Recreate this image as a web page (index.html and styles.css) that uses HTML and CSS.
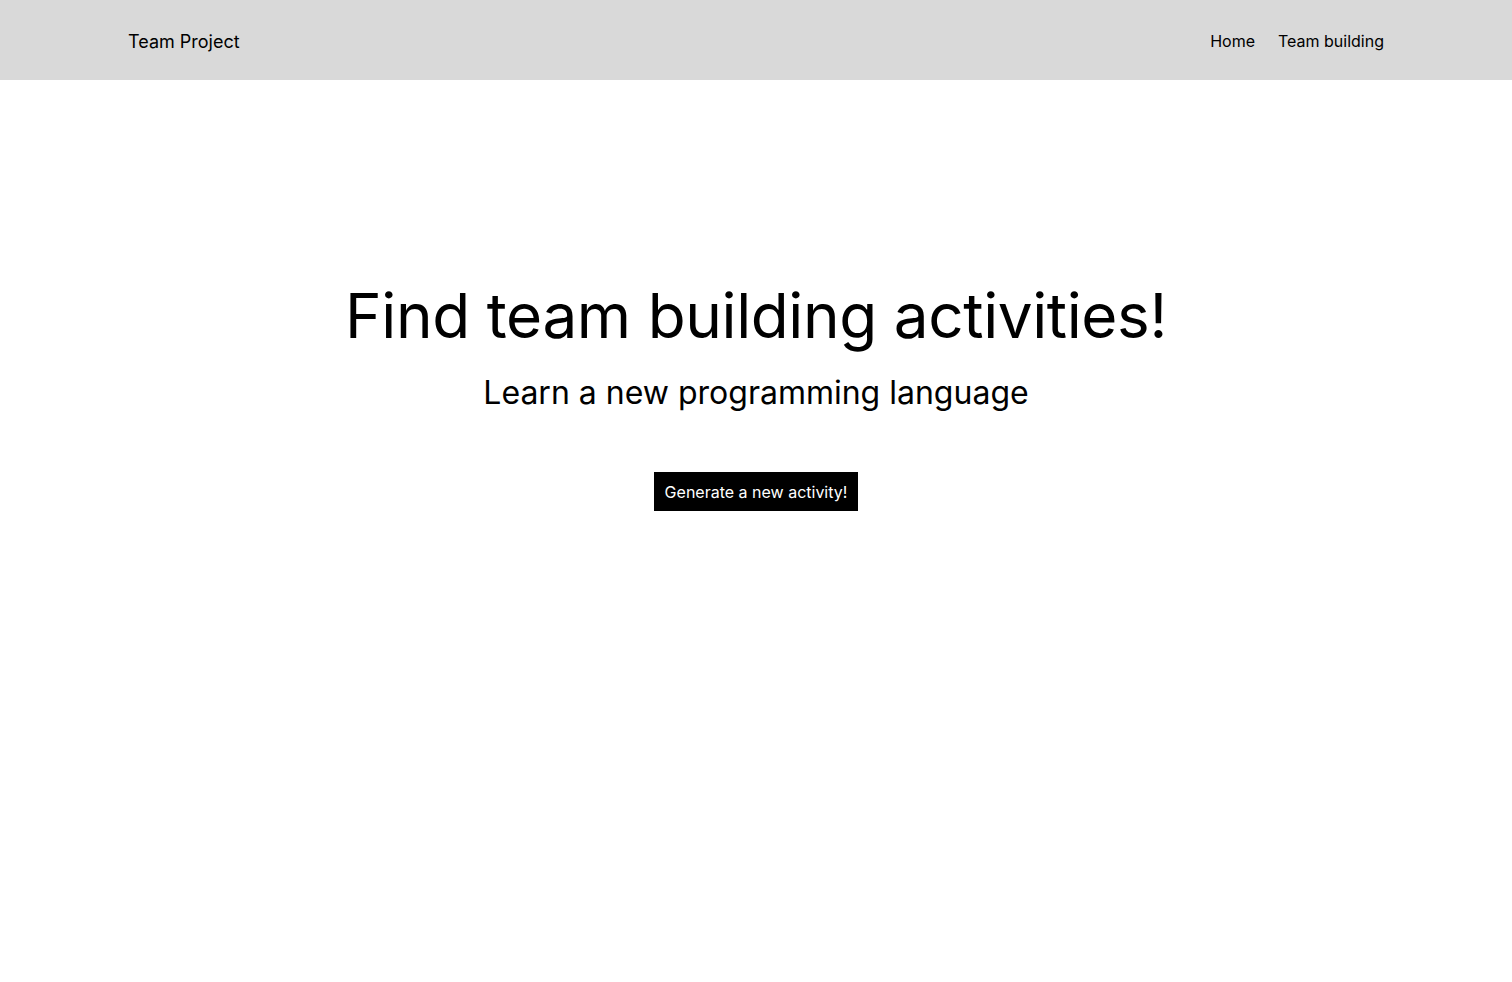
FILE: index.html
```html
<!DOCTYPE html>
<html lang="en">
<head>
<meta charset="utf-8">
<title>Team Project</title>
<link rel="stylesheet" href="styles.css">
</head>
<body>
<header class="topbar">
  <div class="brand">Team Project</div>
  <nav class="nav">
    <a class="nav-link" href="#">Home</a>
    <a class="nav-link" href="#">Team building</a>
  </nav>
</header>
<main class="hero">
  <h1 class="title">Find team building activities!</h1>
  <p class="subtitle">Learn a new programming language</p>
  <button class="btn">Generate a new activity!</button>
</main>
</body>
</html>
```

FILE: styles.css
```css
* { box-sizing: border-box; }
html, body { margin: 0; padding: 0; }
body {
  font-family: Inter, "Noto Sans", sans-serif;
  color: #000;
  background: #fff;
}
.topbar {
  height: 80px;
  background: #d9d9d9;
  display: flex;
  align-items: center;
  justify-content: space-between;
  padding: 2px 128px 0;
}
.brand {
  font-size: 18px;
  color: #000;
}
.nav {
  display: flex;
  gap: 23px;
}
.nav-link {
  font-size: 16px;
  color: #000;
  text-decoration: none;
}
.hero {
  display: flex;
  flex-direction: column;
  align-items: center;
  padding-top: 198px;
}
.title {
  margin: 0;
  font-size: 62px;
  font-weight: 400;
  line-height: 75px;
  letter-spacing: -0.4px;
}
.subtitle {
  margin: 20px 0 0;
  font-size: 32px;
  line-height: 39px;
}
.btn {
  margin-top: 60px;
  background: #000;
  color: #fff;
  border: none;
  font-family: Inter, "Noto Sans", sans-serif;
  font-size: 16px;
  padding: 0 11px;
  height: 39px;
  cursor: pointer;
}
```
